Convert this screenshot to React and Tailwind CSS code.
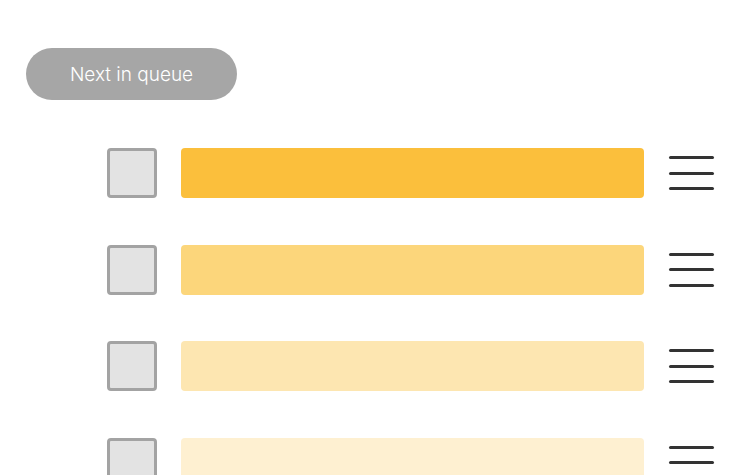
import React from 'react';

const rows = ['bg-[#fbbf3c]', 'bg-[#fcd67b]', 'bg-[#fde6b1]', 'bg-[#fef0d1]'];

const Hamburger = () => (
  <div className="flex flex-col gap-[12.5px] w-[45px] shrink-0">
    <span className="block h-[3px] w-full rounded-full bg-[#333333]" />
    <span className="block h-[3px] w-full rounded-full bg-[#333333]" />
    <span className="block h-[3px] w-full rounded-full bg-[#333333]" />
  </div>
);

const QueueRow = ({ color }) => (
  <li className="flex items-center h-[50px]">
    <span className="h-[50px] w-[50px] shrink-0 rounded-[4px] border-[3px] border-[#a3a3a3] bg-[#e3e3e3]" />
    <div className={`ml-[24px] h-[50px] w-[463px] rounded-[4px] ${color}`} />
    <div className="ml-[25px]">
      <Hamburger />
    </div>
  </li>
);

export default function App() {
  return (
    <div className="w-[750px] h-[475px] overflow-hidden bg-white font-['Lato',sans-serif]">
      <div className="pt-[48px] pl-[26px]">
        <button className="flex items-center justify-center pt-[3px] h-[52px] w-[211px] rounded-full bg-[#a6a6a6] text-white text-[19px] font-light font-['Inter',sans-serif]">
          Next in queue
        </button>
      </div>
      <ul className="mt-[48px] pl-[107px] flex flex-col gap-[46.5px]">
        {rows.map((c, i) => (
          <QueueRow key={i} color={c} />
        ))}
      </ul>
    </div>
  );
}
